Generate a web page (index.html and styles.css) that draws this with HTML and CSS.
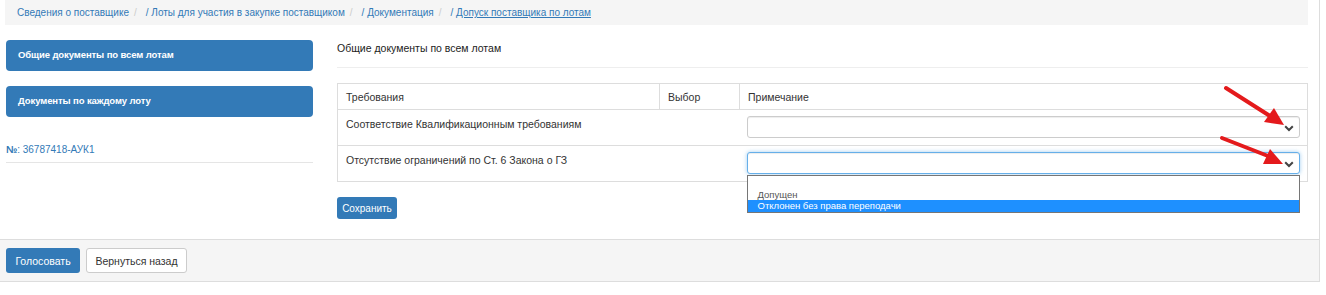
FILE: index.html
```html
<!DOCTYPE html>
<html lang="ru">
<head>
<meta charset="utf-8">
<link rel="stylesheet" href="styles.css">
</head>
<body>
<div class="page">
  <div class="crumbs">
    <a class="crumb">Сведения о поставщике</a><span class="sep">/</span>
    <a class="crumb">/ Лоты для участия в закупке поставщиком</a><span class="sep">/</span>
    <a class="crumb">/ Документация</a><span class="sep">/</span>
    <a class="crumb">/ <u>Допуск поставщика по лотам</u></a>
  </div>
  <div class="main">
    <div class="side">
      <div class="side-btn">Общие документы по всем лотам</div>
      <div class="side-btn">Документы по каждому лоту</div>
      <div class="lot-no"><b>№</b>: 36787418-АУК1</div>
    </div>
    <div class="content">
      <div class="title">Общие документы по всем лотам</div>
      <table class="req">
        <thead>
          <tr><th class="c1">Требования</th><th class="c2">Выбор</th><th class="c3">Примечание</th></tr>
        </thead>
        <tbody>
          <tr>
            <td colspan="2">Соответствие Квалификационным требованиям</td>
            <td class="sel-cell"><div class="select"><svg class="chev" width="10" height="7" viewBox="0 0 10 7"><path d="M1.2 1.2 L5 5 L8.8 1.2" fill="none" stroke="#444" stroke-width="2"/></svg></div></td>
          </tr>
          <tr>
            <td colspan="2">Отсутствие ограничений по Ст. 6 Закона о ГЗ</td>
            <td class="sel-cell">
              <div class="select focus"><svg class="chev" width="10" height="7" viewBox="0 0 10 7"><path d="M1.2 1.2 L5 5 L8.8 1.2" fill="none" stroke="#444" stroke-width="2"/></svg></div>
              <div class="list">
                <div class="opt">&nbsp;</div>
                <div class="opt">Допущен</div>
                <div class="opt hl">Отклонен без права переподачи</div>
              </div>
            </td>
          </tr>
        </tbody>
      </table>
      <div class="btn-save">Сохранить</div>
    </div>
  </div>
  <div class="footer">
    <div class="btn-vote">Голосовать</div>
    <div class="btn-back">Вернуться назад</div>
  </div>
  <svg class="arrows" width="1326" height="295" viewBox="0 0 1326 295">
    <line x1="1226" y1="88" x2="1270" y2="116" stroke="#e41a1c" stroke-width="4" stroke-linecap="round"/>
    <polygon points="1284,125 1264,122 1274,108" fill="#e41a1c"/>
    <line x1="1222" y1="138" x2="1268" y2="156" stroke="#e41a1c" stroke-width="4" stroke-linecap="round"/>
    <polygon points="1283,164 1263,164 1270,149" fill="#e41a1c"/>
  </svg>
</div>
</body>
</html>
```
FILE: styles.css
```css
* { box-sizing: border-box; }
html, body { margin: 0; padding: 0; background: #fff; }
body {
  font-family: "Liberation Sans", Arial, sans-serif;
  font-size: 10.5px;
  color: #333;
}
.page {
  position: relative;
  width: 1320px;
  height: 282px;
  border-right: 1px solid #ddd;
}
.crumbs {
  margin-left: 5px;
  width: 1303px;
  height: 25px;
  background: #f5f5f5;
  padding: 0 0 0 12px;
  display: flex;
  align-items: center;
  white-space: nowrap;
  font-size: 10px;
}
.crumb { color: #337ab7; }
.sep { color: #ccc; padding: 0 9px 0 5px; }
.main {
  display: flex;
  gap: 24px;
  padding: 15px 0 0 6px;
  height: 214px;
}
.side { width: 307px; }
.side-btn {
  height: 31px;
  background: #337ab7;
  border-radius: 4px;
  color: #fff;
  font-weight: bold;
  font-size: 9.5px;
  padding-left: 12px;
  padding-bottom: 2px;
  display: flex;
  align-items: center;
  margin-bottom: 15px;
  letter-spacing: -0.1px;
}
.lot-no {
  margin-top: 26px;
  color: #337ab7;
  font-size: 10px;
  padding-bottom: 4px;
  border-bottom: 1px solid #e5e5e5;
  height: 20px;
  padding-top: 1px;
}
.lot-no b { font-weight: bold; }
.content { width: 971px; }
.title {
  padding-top: 1px;
  height: 28px;
  line-height: 14px;
  border-bottom: 1px solid #eee;
  color: #222;
}
.req {
  margin-top: 15px;
  width: 971px;
  border-collapse: collapse;
  border: 1px solid #ddd;
  table-layout: fixed;
}
.req th {
  text-align: left;
  font-weight: normal;
  height: 26px;
  padding: 0 8px;
  border: 1px solid #ddd;
  color: #333;
}
.req th.c1 { width: 322px; }
.req th.c2 { width: 80px; }
.req td {
  vertical-align: top;
  border-top: 1px solid #ddd;
  padding: 7px 8px 0 8px;
  height: 36px;
  line-height: 14px;
}
.req td.sel-cell { padding: 6px 7px 0 7px; position: relative; }
.select {
  position: relative;
  width: 553px;
  height: 22px;
  border: 1px solid #ccc;
  border-radius: 3px;
  background: #fff;
  box-shadow: inset 0 1px 1px rgba(0,0,0,0.075);
}
.select.focus {
  border-color: #66afe9;
  box-shadow: inset 0 1px 1px rgba(0,0,0,0.075), 0 0 4px rgba(102,175,233,0.6);
}
.chev { position: absolute; right: 5px; top: 8px; }
.list {
  position: absolute;
  left: 7px;
  top: 29px;
  width: 553px;
  height: 38px;
  border: 1px solid #767676;
  background: #fff;
  padding-top: 1px;
  z-index: 2;
}
.opt {
  height: 11.5px;
  line-height: 11px;
  font-size: 9.5px;
  padding-left: 10px;
  color: #555;
}
.opt.hl { background: #1e90ff; color: #fff; }
.btn-save {
  margin-top: 15px;
  width: 60px;
  height: 22px;
  background: #337ab7;
  border-radius: 3px;
  color: #fff;
  font-size: 10px;
  display: flex;
  align-items: center;
  justify-content: center;
}
.footer {
  height: 43px;
  background: #f5f5f5;
  border-top: 1px solid #ddd;
  border-bottom: 1px solid #ddd;
  display: flex;
  align-items: center;
  gap: 6px;
  padding-left: 6px;
}
.btn-vote, .btn-back {
  height: 25px;
  border-radius: 3px;
  font-size: 10.5px;
  display: flex;
  align-items: center;
  justify-content: center;
}
.btn-vote { width: 74px; background: #337ab7; color: #fff; }
.btn-back { width: 101px; background: #fff; border: 1px solid #ccc; color: #333; }
.arrows { position: absolute; left: 0; top: 0; pointer-events: none; z-index: 5; }
```
